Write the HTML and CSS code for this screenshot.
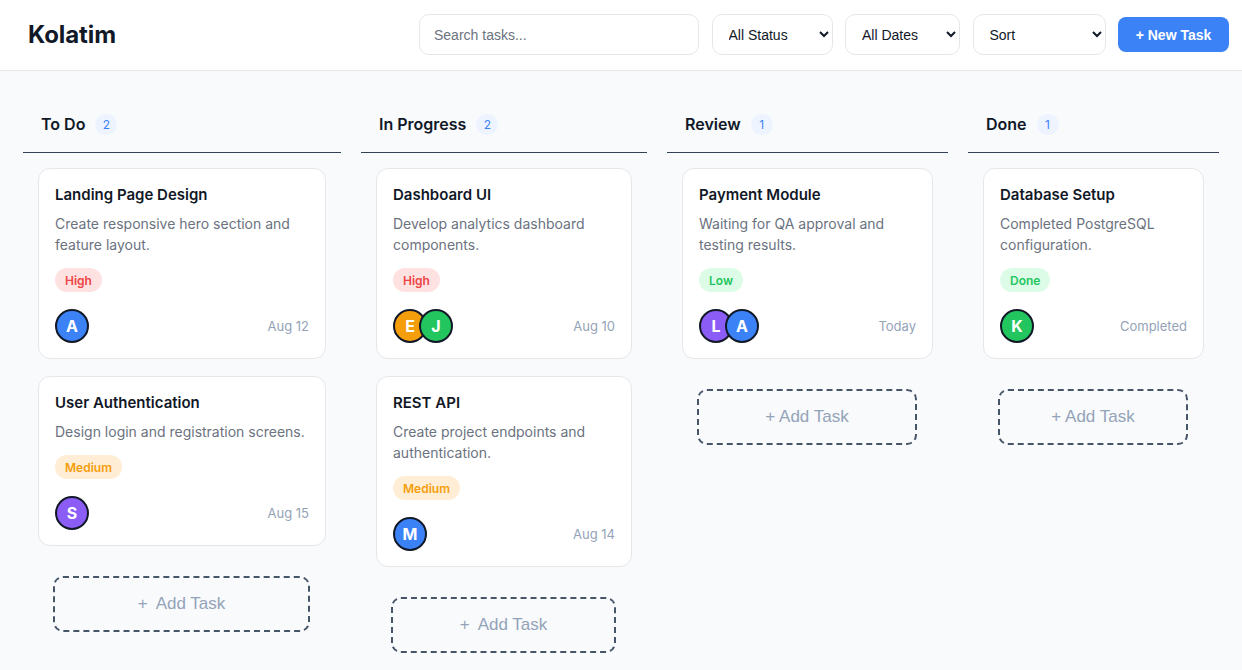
FILE: index.html
```html
<!DOCTYPE html>
<html lang="en">
<head>
<meta charset="utf-8">
<title>Kolatim</title>
<link rel="stylesheet" href="styles.css">
</head>
<body>
<header class="topbar">
  <h1 class="brand">Kolatim</h1>
  <div class="controls">
    <input class="search" type="text" placeholder="Search tasks...">
    <select class="select select-status"><option>All Status</option></select>
    <select class="select select-dates"><option>All Dates</option></select>
    <select class="select select-sort"><option>Sort</option></select>
    <button class="btn-new">+ New Task</button>
  </div>
</header>

<main class="board">
  <section class="column">
    <div class="col-head"><h2 class="col-title">To Do</h2><span class="count">2</span></div>
    <div class="cards">
      <article class="card">
        <h3 class="card-title">Landing Page Design</h3>
        <p class="card-desc">Create responsive hero section and feature layout.</p>
        <span class="tag tag-high">High</span>
        <div class="card-foot">
          <div class="avatars"><span class="avatar av-blue">A</span></div>
          <span class="date">Aug 12</span>
        </div>
      </article>
      <article class="card">
        <h3 class="card-title">User Authentication</h3>
        <p class="card-desc">Design login and registration screens.</p>
        <span class="tag tag-medium">Medium</span>
        <div class="card-foot">
          <div class="avatars"><span class="avatar av-purple">S</span></div>
          <span class="date">Aug 15</span>
        </div>
      </article>
    </div>
    <button class="add-task wide"><span>+</span><span>Add Task</span></button>
  </section>

  <section class="column">
    <div class="col-head"><h2 class="col-title">In Progress</h2><span class="count">2</span></div>
    <div class="cards">
      <article class="card">
        <h3 class="card-title">Dashboard UI</h3>
        <p class="card-desc">Develop analytics dashboard components.</p>
        <span class="tag tag-high">High</span>
        <div class="card-foot">
          <div class="avatars"><span class="avatar av-orange">E</span><span class="avatar av-green">J</span></div>
          <span class="date">Aug 10</span>
        </div>
      </article>
      <article class="card">
        <h3 class="card-title">REST API</h3>
        <p class="card-desc">Create project endpoints and authentication.</p>
        <span class="tag tag-medium">Medium</span>
        <div class="card-foot">
          <div class="avatars"><span class="avatar av-blue">M</span></div>
          <span class="date">Aug 14</span>
        </div>
      </article>
    </div>
    <button class="add-task wide"><span>+</span><span>Add Task</span></button>
  </section>

  <section class="column">
    <div class="col-head"><h2 class="col-title">Review</h2><span class="count">1</span></div>
    <div class="cards">
      <article class="card">
        <h3 class="card-title">Payment Module</h3>
        <p class="card-desc">Waiting for QA approval and testing results.</p>
        <span class="tag tag-low">Low</span>
        <div class="card-foot">
          <div class="avatars"><span class="avatar av-purple">L</span><span class="avatar av-blue">A</span></div>
          <span class="date">Today</span>
        </div>
      </article>
    </div>
    <button class="add-task">+ Add Task</button>
  </section>

  <section class="column">
    <div class="col-head"><h2 class="col-title">Done</h2><span class="count">1</span></div>
    <div class="cards">
      <article class="card">
        <h3 class="card-title">Database Setup</h3>
        <p class="card-desc">Completed PostgreSQL configuration.</p>
        <span class="tag tag-low">Done</span>
        <div class="card-foot">
          <div class="avatars"><span class="avatar av-green">K</span></div>
          <span class="date">Completed</span>
        </div>
      </article>
    </div>
    <button class="add-task">+ Add Task</button>
  </section>
</main>
</body>
</html>
```

FILE: styles.css
```css
* { box-sizing: border-box; }

html, body {
  margin: 0;
  padding: 0;
}

body {
  font-family: Inter, "Noto Sans", sans-serif;
  background: #f8fafc;
  color: #111827;
  min-height: 670px;
}

.topbar {
  height: 71px;
  background: #ffffff;
  border-bottom: 1px solid #e5e7eb;
  display: flex;
  align-items: center;
  justify-content: space-between;
  padding: 0 13px 1px 28px;
}

.brand {
  margin: 0;
  font-size: 24px;
  font-weight: 700;
  color: #111827;
  letter-spacing: -0.1px;
}

.controls {
  display: flex;
  align-items: center;
  gap: 12.5px;
}

.search {
  width: 280px;
  height: 41px;
  border: 1px solid #e5e7eb;
  border-radius: 10px;
  padding: 0 14px;
  font-family: "Liberation Sans", Arial, sans-serif;
  font-size: 14px;
  color: #111827;
  background: #fff;
  outline: none;
}

.search::placeholder { color: #6b7280; }

.select {
  height: 41px;
  border: 1px solid #e5e7eb;
  border-radius: 10px;
  padding: 0 8px 0 12px;
  font-family: "Liberation Sans", Arial, sans-serif;
  font-size: 14px;
  color: #111827;
  background: #fff;
}

.select-status { width: 121px; }
.select-dates { width: 115px; }
.select-sort { width: 133px; }

.btn-new {
  height: 35px;
  width: 111px;
  border: none;
  border-radius: 8px;
  background: #3b82f6;
  color: #fff;
  font-family: "Liberation Sans", Arial, sans-serif;
  font-size: 14px;
  font-weight: 700;
}

.board {
  display: grid;
  grid-template-columns: 318fr 286fr 281fr 251fr;
  gap: 20px;
  padding: 24px 23px 24px;
  align-items: start;
}

.column {
  display: flex;
  flex-direction: column;
}

.col-head {
  display: flex;
  align-items: center;
  gap: 10px;
  padding: 17px 18px 16px;
  border-bottom: 1px solid #334155;
}

.col-title {
  margin: 0;
  font-size: 16px;
  line-height: 24px;
  font-weight: 600;
  color: #111827;
}

.count {
  min-width: 22px;
  height: 21px;
  padding: 0 7px;
  border-radius: 999px;
  background: #eef4ff;
  color: #3b82f6;
  font-size: 12px;
  display: inline-flex;
  align-items: center;
  justify-content: center;
}

.cards {
  display: flex;
  flex-direction: column;
  gap: 17px;
  padding: 15px 15px 0;
}

.card {
  background: #fff;
  border: 1px solid #e5e7eb;
  border-radius: 12px;
  padding: 16px 16px 15px;
  display: flex;
  flex-direction: column;
  align-items: flex-start;
}

.card-title {
  margin: 0;
  font-size: 15px;
  line-height: 20px;
  font-weight: 600;
  color: #111827;
}

.card-desc {
  margin: 8px 0 0;
  font-size: 14px;
  line-height: 21px;
  color: #6b7280;
}

.tag {
  margin-top: 13px;
  height: 24px;
  padding: 0 10px;
  border-radius: 999px;
  font-size: 12px;
  font-weight: 600;
  display: inline-flex;
  align-items: center;
}

.tag-high { background: #fee2e2; color: #ef4444; }
.tag-medium { background: #ffedd5; color: #f59e0b; }
.tag-low { background: #dcfce7; color: #22c55e; }

.card-foot {
  margin-top: 17px;
  width: 100%;
  display: flex;
  align-items: center;
  justify-content: space-between;
}

.avatars {
  display: flex;
}

.avatar {
  width: 34px;
  height: 34px;
  border-radius: 50%;
  border: 2px solid #111827;
  color: #fff;
  font-size: 16px;
  font-weight: 700;
  display: inline-flex;
  align-items: center;
  justify-content: center;
}

.avatar + .avatar { margin-left: -8px; }

.av-blue { background: #3b82f6; }
.av-orange { background: #f59e0b; }
.av-green { background: #22c55e; }
.av-purple { background: #8b5cf6; }

.date {
  font-size: 13px;
  color: #94a3b8;
}

.add-task {
  margin: 30px 31px 0 30px;
  height: 56px;
  border: 2px dashed #475569;
  border-radius: 10px;
  background: transparent;
  color: #94a3b8;
  font-family: "Liberation Sans", Arial, sans-serif;
  font-size: 17px;
  display: flex;
  align-items: center;
  justify-content: center;
  gap: 4px;
}

.add-task.wide { gap: 8px; }
```
